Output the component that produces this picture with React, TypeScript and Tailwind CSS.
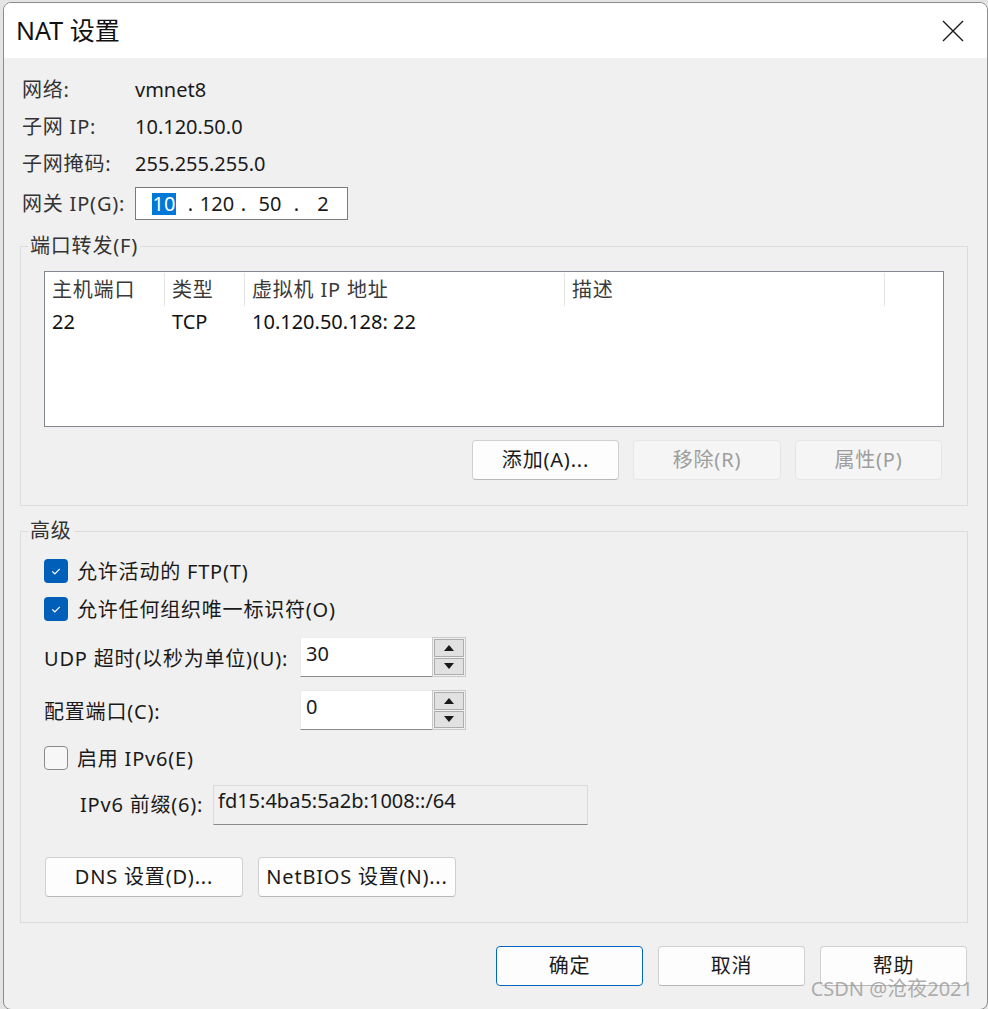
import type { ReactNode } from "react";

const font = "font-['Noto_Sans','Noto_Sans_CJK_SC',sans-serif]";
// CJK labels in the original run a little wider than Noto's 1em glyphs
const cj = "tracking-[0.8px]";

function Btn({
  children,
  className = "",
  disabled,
  primary,
}: {
  children: ReactNode;
  className?: string;
  disabled?: boolean;
  primary?: boolean;
}) {
  const tone = disabled
    ? "bg-[#f5f5f5] border-[#e5e5e5] text-[#9d9d9d]"
    : primary
      ? "bg-[#fdfdfd] border-[#0067c0] text-[#1a1a1a]"
      : "bg-[#fdfdfd] border-[#d0d0d0] border-b-[#b8b8b8] text-[#1a1a1a]";
  return (
    <div
      className={`flex h-[40px] items-center justify-center rounded-[4px] border text-[20px] ${cj} ${tone} ${className}`}
    >
      {children}
    </div>
  );
}

function Check({ on, label }: { on?: boolean; label: string }) {
  return (
    <div className="flex h-[38px] items-center gap-[9px]">
      {on ? (
        <span className="flex h-[24px] w-[24px] items-center justify-center rounded-[4px] bg-[#005fb8]">
          <svg width="24" height="24" viewBox="0 0 24 24">
            <path d="M8.2 12.4 L10.8 14.8 L15.8 9.8" fill="none" stroke="white" strokeWidth="1.2" />
          </svg>
        </span>
      ) : (
        <span className="h-[24px] w-[24px] rounded-[4px] border border-[#8a8a8a] bg-[#f7f7f7]" />
      )}
      <span className={`pt-px text-[20px] text-[#1a1a1a] ${cj}`}>{label}</span>
    </div>
  );
}

function Arrow({ up }: { up?: boolean }) {
  return (
    <svg width="10" height="6" viewBox="0 0 10 6">
      <path d={up ? "M0 6 L5 0 L10 6 Z" : "M0 0 L5 6 L10 0 Z"} fill="#1a1a1a" />
    </svg>
  );
}

function Spin({ value }: { value: string }) {
  return (
    <div className="flex h-[40px]">
      <div className="h-full w-[132px] border-t border-l border-b border-t-[#ececec] border-l-[#ececec] border-b-[#8a8a8a] bg-white pt-[3px] pl-[5px] text-[20px] leading-[26px] text-[#1a1a1a]">
        {value}
      </div>
      <div className="flex w-[34px] flex-col gap-px border border-[#c9c9c9] bg-[#f0f0f0] p-px">
        <div className="flex flex-1 items-center justify-center border border-[#adadad] bg-[#e1e1e1]">
          <Arrow up />
        </div>
        <div className="flex flex-1 items-center justify-center border border-[#adadad] bg-[#e1e1e1]">
          <Arrow />
        </div>
      </div>
    </div>
  );
}

const info = [
  ["网络:", "vmnet8"],
  ["子网 IP:", "10.120.50.0"],
  ["子网掩码:", "255.255.255.0"],
];

const cols = [
  { label: "主机端口", w: "w-[120px]", v: "22" },
  { label: "类型", w: "w-[80px]", v: "TCP" },
  { label: "虚拟机 IP 地址", w: "w-[320px]", v: "10.120.50.128: 22" },
  { label: "描述", w: "w-[320px]", v: "" },
];

export default function App() {
  return (
    <div className={`h-[1009px] w-[988px] overflow-hidden bg-[#e4e4e4] pt-[2px] pl-[3px] ${font}`}>
      <div className="relative flex h-[1008px] w-[985px] flex-col overflow-hidden rounded-lg border border-[#8c8c8c] bg-[#f0f0f0]">
        {/* title bar */}
        <div className="flex h-[55px] shrink-0 items-center justify-between bg-white pr-[23px] pl-[12px]">
          <span className="text-[25px] text-[#111]">NAT 设置</span>
          <svg width="22" height="22" viewBox="0 0 22 22">
            <path d="M1 1 L21 21 M21 1 L1 21" stroke="#1a1a1a" strokeWidth="1.4" />
          </svg>
        </div>

        <div className="flex flex-col pt-[13px] pr-[19px] pl-[16px] text-[#1a1a1a]">
          {info.map(([k, v]) => (
            <div key={k} className="flex h-[37px] items-center pl-[2px] text-[20px]">
              <span className={`w-[113px] text-[#333] ${cj}`}>{k}</span>
              <span>{v}</span>
            </div>
          ))}
          <div className="mt-[5px] flex h-[33px] items-center pl-[2px] text-[20px]">
            <span className={`w-[113px] text-[#333] ${cj}`}>网关 IP(G):</span>
            <div className="flex h-[33px] w-[213px] items-center border border-[#7a7a7a] bg-white pl-[8px]">
              <span className="flex w-[40px] justify-center">
                <span className="bg-[#0078d7] px-px leading-[22px] text-white">10</span>
              </span>
              <span className="w-[13px] text-center">.</span>
              <span className="w-[40px] text-center">120</span>
              <span className="w-[13px] text-center">.</span>
              <span className="w-[40px] text-center">50</span>
              <span className="w-[13px] text-center">.</span>
              <span className="w-[40px] text-center">2</span>
            </div>
          </div>

          {/* port forwarding */}
          <fieldset className="mt-[14px] border border-[#dcdcdc] px-[23px] pt-[13px] pb-[25px]">
            <legend className={`ml-[-16px] px-[2px] text-[20px] leading-[24px] text-[#333] ${cj}`}>
              端口转发(F)
            </legend>
            <div className="h-[156px] border border-[#828790] bg-white text-[20px]">
              <div className="flex h-[34px] pt-px">
                {cols.map((c) => (
                  <div
                    key={c.label}
                    className={`${c.w} flex items-center border-r border-[#e5e5e5] pl-[7px] text-[#3a3a3a] ${cj}`}
                  >
                    {c.label}
                  </div>
                ))}
              </div>
              <div className="flex h-[32px] items-center text-[#111]">
                {cols.map((c) => (
                  <div key={c.label} className={`${c.w} pl-[7px]`}>
                    {c.v}
                  </div>
                ))}
              </div>
            </div>
            <div className="mt-[13px] mr-[2px] flex justify-end gap-[14px]">
              <Btn className="w-[147px]">添加(A)...</Btn>
              <Btn className="w-[148px]" disabled>
                移除(R)
              </Btn>
              <Btn className="w-[147px]" disabled>
                属性(P)
              </Btn>
            </div>
          </fieldset>

          {/* advanced */}
          <fieldset className="mt-[13px] border border-[#dcdcdc] px-[23px] pt-[9px] pb-[25px]">
            <legend className={`ml-[-16px] px-[2px] text-[20px] leading-[24px] text-[#333] ${cj}`}>
              高级
            </legend>
            <Check on label="允许活动的 FTP(T)" />
            <Check on label="允许任何组织唯一标识符(O)" />
            <div className="mt-[9px] flex items-center">
              <span className={`w-[256px] pt-[3px] text-[20px] ${cj}`}>UDP 超时(以秒为单位)(U):</span>
              <Spin value="30" />
            </div>
            <div className="mt-[13px] flex items-center">
              <span className={`w-[256px] pt-[3px] text-[20px] ${cj}`}>配置端口(C):</span>
              <Spin value="0" />
            </div>
            <div className="mt-[9px]">
              <Check label="启用 IPv6(E)" />
            </div>
            <div className="mt-[8px] ml-[36px] flex items-center">
              <span className={`w-[133px] text-[20px] ${cj}`}>IPv6 前缀(6):</span>
              <div className="h-[40px] w-[375px] border border-[#dadada] border-b-[#8a8a8a] bg-[#f0f0f0] pt-[2px] pl-[4px] text-[20px] leading-[26px]">
                fd15:4ba5:5a2b:1008::/64
              </div>
            </div>
            <div className="mt-[32px] ml-px flex gap-[15px]">
              <Btn className="w-[198px]">DNS 设置(D)...</Btn>
              <Btn className="w-[198px]">NetBIOS 设置(N)...</Btn>
            </div>
          </fieldset>

          <div className="mt-[23px] flex justify-end gap-[15px] pr-[1px]">
            <Btn className="w-[147px]" primary>
              确定
            </Btn>
            <Btn className="w-[147px]">取消</Btn>
            <Btn className="w-[147px]">帮助</Btn>
          </div>
        </div>

        <span className="absolute right-[14px] bottom-[8px] text-[20px] leading-[24px] text-[#9a9a9a]/80">
          CSDN @沧夜2021
        </span>
      </div>
    </div>
  );
}
